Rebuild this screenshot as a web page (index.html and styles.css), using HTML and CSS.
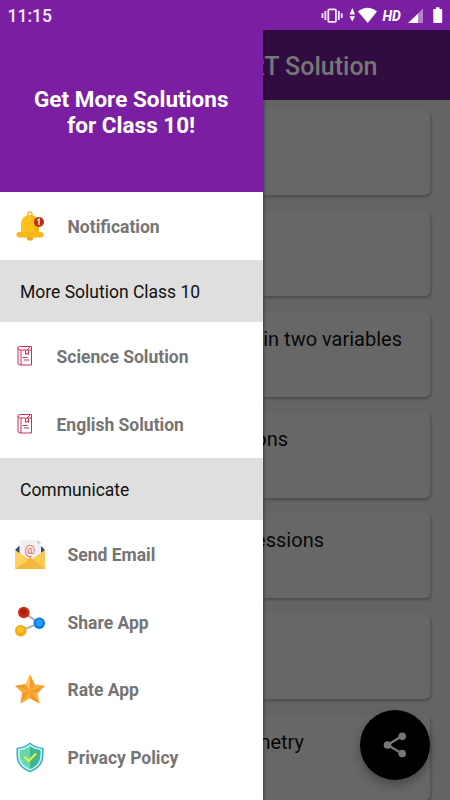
FILE: index.html
```html
<!DOCTYPE html>
<html lang="en">
<head>
<meta charset="utf-8">
<meta name="viewport" content="width=device-width">
<title>NCERT Solution</title>
<link rel="stylesheet" href="styles.css">
</head>
<body>
<div class="screen">
  <header class="status">
    <span class="clock">11:15</span>
    <svg class="status-icons" viewBox="0 0 124 20" width="124" height="20">
      <g fill="none" stroke="#fbeaff" stroke-width="1.800"><rect x="7.300" y="3.300" width="7.600" height="12.600" rx="1"/><path d="M4.400 5v9M17.800 5v9M1.500 7.200v4.800M20.700 7.200v4.800"/></g>
      <g fill="#fff"><path d="M28.500 8.400 31.300 2l2.800 6.400zM28.500 10.200h5.600l-2.800 5.400zM37 5.500Q46.500-2 56 5.500L46.700 17z"/>
      <text class="hd" x="61.500" y="14.500">HD</text>
      <path d="M87 17 97.500 7v10zM113 3h2V1.200h3.500V3h2q.7 0 .7.700v12.600q0 .7-.7.700H113q-.7 0-.7-.7V3.700q0-.7.700-.7z"/></g>
      <path fill="#b681cb" d="M97.500 7l4.500-4.500V17h-4.500z"/>
    </svg>
  </header>
  <div class="content">
    <nav class="drawer">
      <div class="hero">Get More Solutions<br>for Class 10!</div>
      <a class="item">
        <svg class="icon" viewBox="0 0 30 32"><circle cx="15" cy="4" r="2" fill="none" stroke="#eeb529" stroke-width="1.500"/><circle cx="15" cy="27.500" r="3.300" fill="#eea91d"/><path d="M6 23V14C6 2 24 2 24 14v9z" fill="#fcc21c"/><path d="M16 5.500c5 .5 8 3.500 8 8.500v9h-4z" fill="#f6b315"/><rect x="1.500" y="22" width="27" height="5.500" rx="2.700" fill="#f8b719"/><circle cx="24" cy="12" r="5" fill="#c42c12"/><path d="M22.500 10.200 24 9v6" fill="none" stroke="#fff" stroke-width="1.300"/></svg>
        <span>Notification</span>
      </a>
      <div class="section">More Solution Class 10</div>
      <a class="item book">
        <svg class="icon" viewBox="0 0 16 22"><g fill="none" stroke="#c43259"><path d="M1 3v15q0 2 2 2h11.500V5H2.500Q1 5 1 3.300T2.500 1.500h12V5M4 5v15"/><path d="M8.600 5v4.500l1.500-1.300 1.500 1.300V5M10 5l3-3M5.500 12.500h5M7 15h5"/></g></svg>
        <span>Science Solution</span>
      </a>
      <a class="item book">
        <svg class="icon" viewBox="0 0 16 22"><g fill="none" stroke="#c43259"><path d="M1 3v15q0 2 2 2h11.500V5H2.500Q1 5 1 3.300T2.500 1.500h12V5M4 5v15"/><path d="M8.600 5v4.500l1.500-1.300 1.500 1.300V5M10 5l3-3M5.500 12.500h5M7 15h5"/></g></svg>
        <span>English Solution</span>
      </a>
      <div class="section">Communicate</div>
      <a class="item">
        <svg class="icon" viewBox="0 0 30 32"><path d="M0 12 4 8h22l4 4-4 5H4z" fill="#354b62"/><path d="M4.500 2h18L26 5.500V19l-11 5-10.500-6z" fill="#f0f0f2"/><path d="M22.500 2v3.500H26z" fill="#bfc2c8"/><path d="M0 12 15 22.500 30 12v19H0z" fill="#fbca55"/><path d="m0 31 15-12 15 12z" fill="#f4b83f"/><path d="m0 12 13 10.500L0 31z" fill="#ffd05c"/><text class="at" x="15" y="15.500" text-anchor="middle">@</text></svg>
        <span>Send Email</span>
      </a>
      <a class="item">
        <svg class="icon" viewBox="0 0 30 32"><path d="m8.700 6.500 15.800 10.800-19 7.500" fill="none" stroke="#adb6bd" stroke-width="2.200"/><circle cx="8.800" cy="6.500" r="5.800" fill="#c92b10"/><circle cx="8.300" cy="6" r="3" fill="#a62010"/><circle cx="24.300" cy="17.300" r="5.700" fill="#087ce1"/><circle cx="24.300" cy="16.800" r="3.500" fill="#27a0f8"/><circle cx="5.700" cy="24.800" r="5.700" fill="#f6a80d"/><circle cx="5.300" cy="24" r="3.200" fill="#ffc128"/></svg>
        <span>Share App</span>
      </a>
      <a class="item">
        <svg class="icon" viewBox="0 0 30 32"><path d="m15 1.500 4.500 9.800L30 12.700l-7.500 7.400 2 10.400L15 25.300 5.500 30.500l1.800-10.400L0 12.700l10.500-1.400z" fill="#f9ae35"/><path d="M15 1.500V18l4.500-6.700zM30 12.700 15 18l7.500 2.100zM24.500 30.500 15 18v7.300zM5.500 30.500 15 18l-7.700 2.100zM0 12.700 15 18l-4.500-6.700z" fill="#f19a2b"/><path d="M15 1.500V18l-4.500-6.700z" fill="#ffc65a"/></svg>
        <span>Rate App</span>
      </a>
      <a class="item">
        <svg class="icon" viewBox="0 0 30 32"><path d="M15 1.500q5.500 4.800 13.500 5.200V15q0 11-13.500 16.500Q1.500 26 1.500 15V6.700Q9.500 6.300 15 1.500z" fill="#3bafc5"/><path d="M15 3.300q5 4 12 4.600V15q0 9.700-12 14.800Q3 24.700 3 15V7.900q7-.6 12-4.600z" fill="#c5f3ef"/><path d="M15 5.200q4.500 3.300 10.300 4V15q0 8.500-10.300 13Q4.700 23.500 4.700 15V9.200q5.800-.7 10.300-4z" fill="#69d8ad"/><path d="M15 5.200q4.500 3.300 10.300 4V15q0 8.500-10.300 13z" fill="#3fb593"/><path d="m9.500 16 4.200 4L21 12.500" fill="none" stroke="#e9ef3b" stroke-width="2.200"/></svg>
        <span>Privacy Policy</span>
      </a>
    </nav>
    <main class="page">
      <h1 class="appbar"><span>RT Solution</span></h1>
      <div class="cards">
        <section class="card"></section>
        <section class="card"></section>
        <section class="card variables"><span>in two variables</span></section>
        <section class="card equations"><span>ons</span></section>
        <section class="card progressions"><span>essions</span></section>
        <section class="card"></section>
        <section class="card trigonometry"><span>metry</span></section>
      </div>
    </main>
  </div>
  <div class="fab"><svg viewBox="0 0 24 26" width="24" height="26"><path d="M19 4 4.500 13 19 21.500" fill="none" stroke="#777" stroke-width="2.200"/><g fill="#777"><circle cx="19.200" cy="4.300" r="3.800"/><circle cx="4.500" cy="13" r="3.800"/><circle cx="19.200" cy="21.500" r="3.800"/></g></svg></div>
</div>
</body>
</html>
```
FILE: styles.css
```css
* { box-sizing: border-box; }
body { margin: 0; font-family: Roboto, sans-serif; }
.screen { width: 450px; height: 800px; position: relative; overflow: hidden; display: flex; flex-direction: column; background: #646464; }
.status { height: 30px; flex: none; background: #7b1fa2; display: flex; justify-content: space-between; padding: 5px 5px 0 7.500px; }
.status-icons { margin-top: 1px; }
.clock { color: #fbeaff; font-size: 17.5px; font-weight: 500; line-height: 22px; }
.hd { font: italic 700 14px Roboto, sans-serif; }
.content { flex: 1; min-height: 0; display: flex; }
.drawer { width: 262.500px; flex: none; background: #fff; z-index: 1; box-shadow: 1px 0 3px rgba(0,0,0,.4); clip-path: inset(0 -5px 0 0); }
.hero { height: 162.300px; background: #7b1fa2; color: #fff; font-size: 22.500px; line-height: 26px; font-weight: 700; text-align: center; padding-top: 56px; }
.item { height: 67.600px; display: flex; align-items: center; gap: 22.500px; padding: .6px 0 0 15px; color: #757575; font-size: 17.500px; font-weight: 700; }
.item span { padding-top: 1.500px; }
.icon { width: 30px; height: 32px; flex: none; }
.book { padding-left: 17px; gap: 23.500px; }
.book .icon { width: 16px; height: 22px; }
.at { font: 400 12px Roboto, sans-serif; fill: #e56450; }
.section { height: 62.500px; background: #dfdfdf; padding: 2px 0 0 20px; display: flex; align-items: center; color: #111; font-size: 17.500px; }
.page { flex: 1; min-width: 0; overflow: hidden; }
.appbar { margin: 0; height: 70px; background: #310c41; color: #777; font-size: 25px; line-height: 73px; font-weight: 500; display: flex; justify-content: flex-end; padding-right: 72.500px; white-space: nowrap; }
.cards { padding: 10px 20px 0 0; display: grid; grid-template-columns: minmax(0, 1fr); gap: 15.500px; }
.card { height: 85.300px; background: #676767; border-radius: 0 5px 5px 0; box-shadow: 1px 2px 3px rgba(0,0,0,.25); font-size: 20px; line-height: 24px; padding-top: 15px; color: #080808; display: flex; justify-content: flex-end; white-space: nowrap; }
.variables { padding-right: 28px; }
.equations { padding-right: 142px; }
.progressions { padding-right: 106px; }
.trigonometry { padding-right: 126px; }
.fab { position: absolute; right: 20px; bottom: 20px; width: 70px; height: 70px; border-radius: 50%; background: #000; box-shadow: 0 5px 10px rgba(0,0,0,.3); display: grid; place-items: center; }
```
